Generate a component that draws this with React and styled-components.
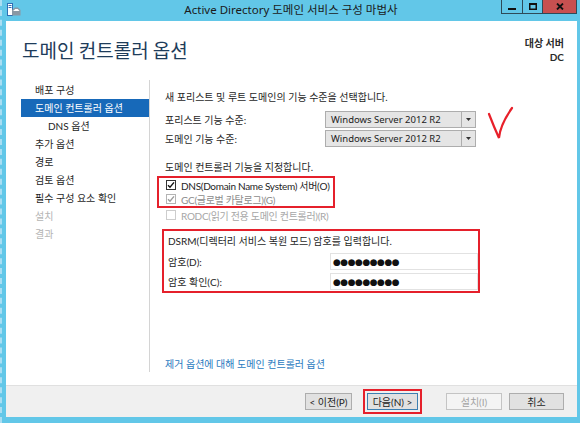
import styled, { createGlobalStyle } from "styled-components";

const GlobalStyle = createGlobalStyle`
  html, body { margin: 0; padding: 0; }
  body {
    font-family: Lato, "Noto Sans CJK KR", sans-serif;
    font-size: 10px;
    color: #1e1e1e;
  }
`;

const Window = styled.div`
  width: 580px;
  height: 423px;
  box-sizing: border-box;
  display: flex;
  flex-direction: column;
  background: #62c7e8;
  border-left: 2px dashed #a9def3;
  overflow: hidden;
`;

const TitleBar = styled.div`
  height: 21px;
  display: grid;
  grid-template-columns: 1fr auto 1fr;
  align-items: start;
`;

const AppIcon = styled.svg`
  margin: 3px 0 0 5px;
`;

const TitleText = styled.div`
  font-family: "Noto Sans", "Noto Sans CJK KR", sans-serif;
  font-size: 11.5px;
  line-height: 20px;
  color: #1a1a1a;
  white-space: nowrap;
`;

const Controls = styled.div`
  justify-self: end;
  display: flex;
  margin-right: 3px;
`;

const CtrlButton = styled.div`
  width: ${(p) => p.$w}px;
  height: 14px;
  box-sizing: border-box;
  border: 1px solid #2e4a58;
  border-top: 0;
  margin-left: -1px;
  background: ${(p) => (p.$close ? "#c75050" : "transparent")};
  display: flex;
  align-items: center;
  justify-content: center;
`;

const Frame = styled.div`
  flex: 1;
  display: flex;
  flex-direction: column;
  margin: 0 3px 6px 4px;
  min-height: 0;
`;

const Page = styled.div`
  flex: 1;
  background: #fff;
  display: flex;
  flex-direction: column;
  min-height: 0;
`;

const Header = styled.div`
  height: 59px;
  box-sizing: border-box;
  display: flex;
  justify-content: space-between;
  padding: 0 13px 0 16px;
`;

const PageTitle = styled.h1`
  margin: 17px 0 0;
  font-family: "Noto Sans CJK KR", sans-serif;
  font-size: 19px;
  line-height: 24px;
  font-weight: 400;
  color: #1e3c5a;
`;

const Target = styled.div`
  padding-top: 15px;
  text-align: right;
  font-weight: 700;
  line-height: 14px;
  color: #2a2a2a;
`;

const Main = styled.div`
  flex: 1;
  display: flex;
  padding-bottom: 13px;
  min-height: 0;
`;

const Nav = styled.div`
  width: 144px;
  box-sizing: border-box;
  border-right: 1px solid #d4d4d4;
  padding: 1px 0 0 15px;
  display: flex;
  flex-direction: column;
`;

const NavItem = styled.div`
  height: 18px;
  line-height: 18px;
  padding-left: ${(p) => (p.$sub ? 27 : 14)}px;
  background: ${(p) => (p.$active ? "#1769b9" : "transparent")};
  color: ${(p) => (p.$active ? "#fff" : p.$disabled ? "#b4b4b4" : "#1e1e1e")};
  white-space: nowrap;
`;

const Content = styled.div`
  flex: 1;
  position: relative;
  display: flex;
  flex-direction: column;
  padding: 10px 0 14px 12px;
  margin-bottom: -13px;
`;

const Line = styled.div`
  line-height: 14px;
  padding-left: 3px;
  margin-top: ${(p) => p.$mt || 0}px;
  white-space: nowrap;
`;

const FieldRow = styled.div`
  display: grid;
  grid-template-columns: ${(p) => p.$label}px ${(p) => p.$field}px;
  align-items: center;
  padding-left: 3px;
  margin-top: ${(p) => p.$mt || 0}px;
  white-space: nowrap;
`;

const Combo = styled.div`
  height: 17px;
  box-sizing: border-box;
  border: 1px solid #adadad;
  background: #e5e5e5;
  display: flex;
  align-items: center;
  margin-left: -1px;
`;

const ComboText = styled.span`
  flex: 1;
  padding-left: 5px;
  font-family: "Noto Sans", sans-serif;
  font-size: 9.5px;
  color: #222;
`;

const ComboArrow = styled.span`
  width: 13px;
  height: 100%;
  border-left: 1px solid #adadad;
  display: flex;
  align-items: center;
  justify-content: center;
`;

const Annotation = styled.div`
  border: 2px solid #e5202b;
  margin-left: ${(p) => p.$ml || 0}px;
  margin-top: ${(p) => p.$mt || 0}px;
  width: ${(p) => p.$w}px;
  padding: ${(p) => p.$pad || "0"};
  box-sizing: border-box;
`;

const CheckRow = styled.div`
  height: 14px;
  display: flex;
  align-items: center;
  gap: 5px;
  padding-left: ${(p) => p.$pl || 0}px;
  color: ${(p) => p.$color || "#1e1e1e"};
  letter-spacing: -0.3px;
  white-space: nowrap;
`;

const Box = styled.span`
  width: 10px;
  height: 10px;
  box-sizing: border-box;
  border: 1px solid ${(p) => p.$border};
  background: #fff;
  display: flex;
  align-items: center;
  justify-content: center;
`;

const Password = styled.div`
  height: 17px;
  box-sizing: border-box;
  border: 1px solid #e2e2e2;
  padding-left: 2px;
  display: flex;
  align-items: center;
  font-size: 9px;
  letter-spacing: -0.5px;
  color: #111;
  font-family: "DejaVu Sans", sans-serif;
`;

const Link = styled.div`
  margin-top: auto;
  padding-left: 3px;
  line-height: 14px;
  color: #2a7ac0;
`;

const Scribble = styled.svg`
  position: absolute;
  left: 329px;
  top: 20px;
`;

const Footer = styled.div`
  height: 32px;
  box-sizing: border-box;
  background: #f0f0f0;
  border-top: 1px solid #e0e0e0;
  display: flex;
  align-items: center;
  justify-content: flex-end;
  padding-right: 13px;
`;

const Button = styled.div`
  width: ${(p) => p.$w}px;
  height: 17px;
  box-sizing: border-box;
  border: 1px solid ${(p) => (p.$default ? "#3c7fb1" : p.$disabled ? "#c4c4c4" : "#adadad")};
  background: ${(p) => (p.$disabled ? "#f4f4f4" : "#e1e1e1")};
  color: ${(p) => (p.$disabled ? "#a3a3a3" : "#1e1e1e")};
  margin-left: ${(p) => p.$ml || 0}px;
  display: flex;
  align-items: center;
  justify-content: center;
  white-space: nowrap;
`;

const ButtonMark = styled.div`
  border: 2px solid #e5202b;
  padding: 2px;
  margin-left: ${(p) => p.$ml}px;
  display: flex;
`;

function Check({ color }) {
  return (
    <svg width="8" height="8" viewBox="0 0 8 8">
      <path d="M1 4.2 L3 6.2 L7 1.4" fill="none" stroke={color} strokeWidth="1.4" />
    </svg>
  );
}

function Arrow() {
  return (
    <ComboArrow>
      <svg width="5" height="3" viewBox="0 0 5 3">
        <path d="M0 0 L5 0 L2.5 3 Z" fill="#333" />
      </svg>
    </ComboArrow>
  );
}

const navItems = [
  { label: "배포 구성" },
  { label: "도메인 컨트롤러 옵션", active: true },
  { label: "DNS 옵션", sub: true },
  { label: "추가 옵션" },
  { label: "경로" },
  { label: "검토 옵션" },
  { label: "필수 구성 요소 확인" },
  { label: "설치", disabled: true },
  { label: "결과", disabled: true },
];

export default function App() {
  return (
    <>
      <GlobalStyle />
      <Window>
        <TitleBar>
          <AppIcon width="14" height="13" viewBox="0 0 14 13">
            <rect x="0.5" y="0.5" width="5" height="12" fill="#fff" stroke="#2f6fb5" />
            <rect x="1.5" y="2" width="3" height="1" fill="#2f6fb5" />
            <rect x="1.5" y="4" width="3" height="1" fill="#2f6fb5" />
            <path d="M5 12.5 L5 7 L8 4.5 L11 4.5 L13.5 7 L13.5 12.5 Z" fill="#8a98a4" />
            <path d="M6 8 L8.3 6 L10.8 6 L12.5 8 Z" fill="#fff" />
          </AppIcon>
          <TitleText>Active Directory 도메인 서비스 구성 마법사</TitleText>
          <Controls>
            <CtrlButton $w={22}>
              <svg width="8" height="8" viewBox="0 0 8 8">
                <rect x="0" y="5" width="8" height="2" fill="#111" />
              </svg>
            </CtrlButton>
            <CtrlButton $w={21}>
              <svg width="8" height="7" viewBox="0 0 8 7">
                <rect x="0.75" y="0.75" width="6.5" height="5.5" fill="none" stroke="#111" strokeWidth="1.5" />
                <rect x="0" y="0" width="8" height="2" fill="#111" />
              </svg>
            </CtrlButton>
            <CtrlButton $w={35} $close>
              <svg width="8" height="7" viewBox="0 0 8 7">
                <path d="M1 0.5 L7 6.5 M7 0.5 L1 6.5" stroke="#111" strokeWidth="1.8" />
              </svg>
            </CtrlButton>
          </Controls>
        </TitleBar>
        <Frame>
          <Page>
            <Header>
              <PageTitle>도메인 컨트롤러 옵션</PageTitle>
              <Target>
                대상 서버
                <br />
                DC
              </Target>
            </Header>
            <Main>
              <Nav>
                {navItems.map((item) => (
                  <NavItem
                    key={item.label}
                    $active={item.active}
                    $sub={item.sub}
                    $disabled={item.disabled}
                  >
                    {item.label}
                  </NavItem>
                ))}
              </Nav>
              <Content>
                <Line>새 포리스트 및 루트 도메인의 기능 수준을 선택합니다.</Line>
                <FieldRow $label={161} $field={150} $mt={7}>
                  <span>포리스트 기능 수준:</span>
                  <Combo>
                    <ComboText>Windows Server 2012 R2</ComboText>
                    <Arrow />
                  </Combo>
                </FieldRow>
                <FieldRow $label={161} $field={150} $mt={2}>
                  <span>도메인 기능 수준:</span>
                  <Combo>
                    <ComboText>Windows Server 2012 R2</ComboText>
                    <Arrow />
                  </Combo>
                </FieldRow>
                <Line $mt={13}>도메인 컨트롤러 기능을 지정합니다.</Line>
                <Annotation $ml={-5} $mt={2} $w={178}>
                  <CheckRow $pl={7}>
                    <Box $border="#333">
                      <Check color="#111" />
                    </Box>
                    DNS(Domain Name System) 서버(O)
                  </CheckRow>
                  <CheckRow $pl={7} $color="#8c8c8c">
                    <Box $border="#b4b4b4">
                      <Check color="#9a9a9a" />
                    </Box>
                    GC(글로벌 카탈로그)(G)
                  </CheckRow>
                </Annotation>
                <CheckRow $pl={4} $color="#a6a6a6">
                  <Box $border="#cdcdcd" />
                  RODC(읽기 전용 도메인 컨트롤러)(R)
                </CheckRow>
                <Annotation $mt={7} $w={318} $pad="3px 3px 1px 1px">
                  <Line>DSRM(디렉터리 서비스 복원 모드) 암호를 입력합니다.</Line>
                  <FieldRow $label={162} $field={148} $mt={5}>
                    <span>암호(D):</span>
                    <Password>●●●●●●●●●</Password>
                  </FieldRow>
                  <FieldRow $label={162} $field={148} $mt={3}>
                    <span>암호 확인(C):</span>
                    <Password>●●●●●●●●●</Password>
                  </FieldRow>
                </Annotation>
                <Link>제거 옵션에 대해 도메인 컨트롤러 옵션</Link>
                <Scribble width="40" height="40" viewBox="0 0 40 40">
                  <path
                    d="M10 14 Q15 27 20 38 Q21 25 33 8"
                    fill="none"
                    stroke="#e8202a"
                    strokeWidth="2.2"
                    strokeLinecap="round"
                  />
                </Scribble>
              </Content>
            </Main>
          </Page>
          <Footer>
            <Button $w={47}>&lt; 이전(P)</Button>
            <ButtonMark $ml={11}>
              <Button $w={51} $default>
                다음(N) &gt;
              </Button>
            </ButtonMark>
            <Button $w={56} $ml={24} $disabled>
              설치(I)
            </Button>
            <Button $w={55} $ml={7}>
              취소
            </Button>
          </Footer>
        </Frame>
      </Window>
    </>
  );
}
